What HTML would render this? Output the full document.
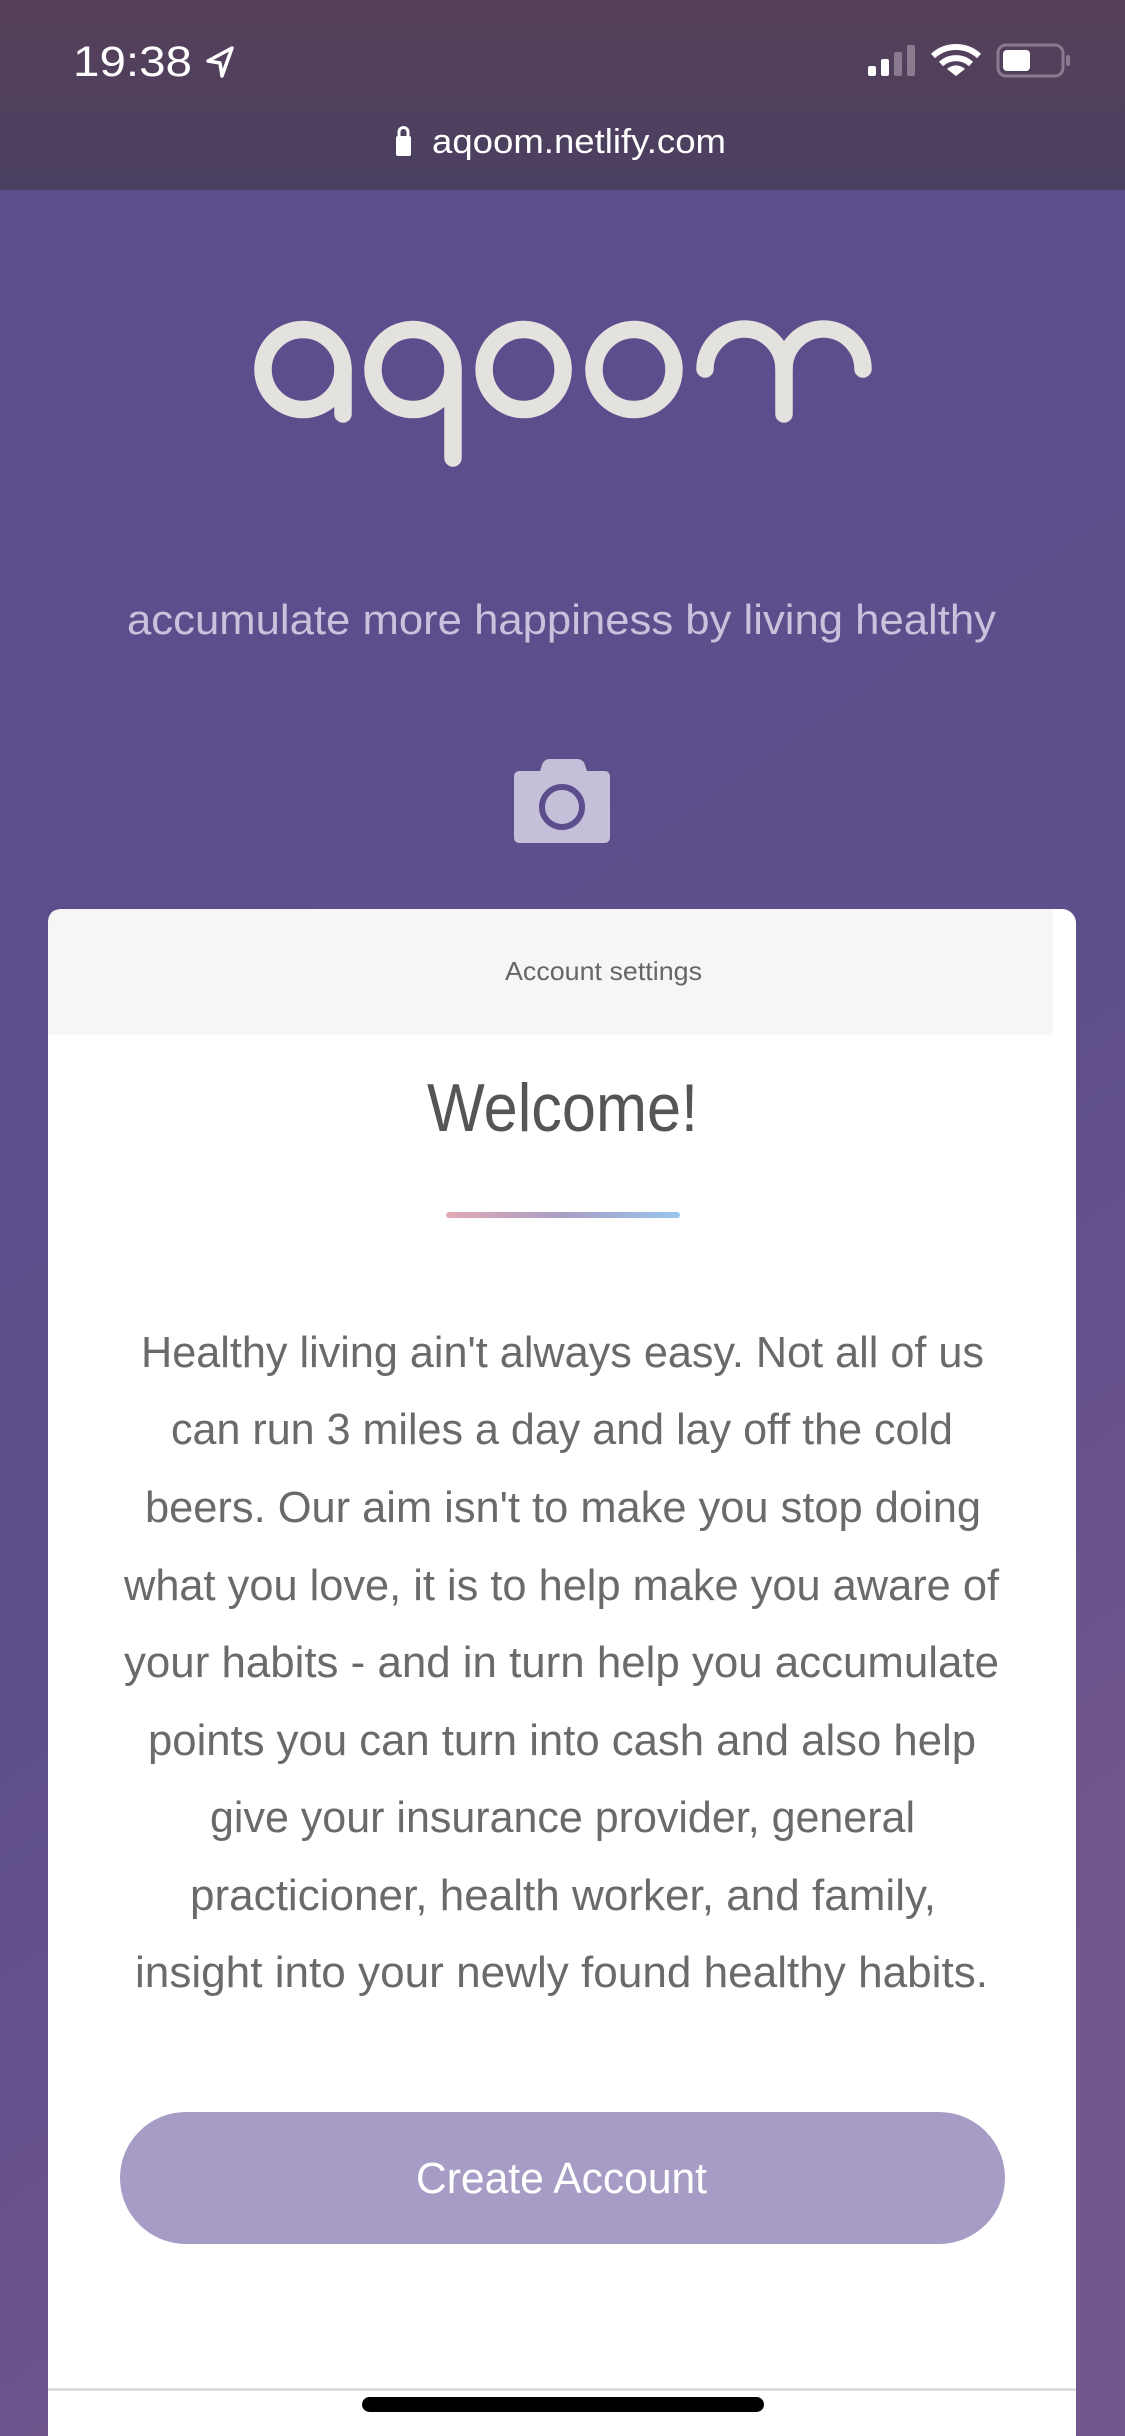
<!DOCTYPE html>
<html><head><meta charset="utf-8">
<style>
html,body{margin:0;padding:0;width:1125px;height:2436px;overflow:hidden;background:#5c4e8c}
svg{display:block}
text{font-family:"Liberation Sans",sans-serif}
</style></head><body>
<svg width="1125" height="2436" viewBox="0 0 1125 2436" xmlns="http://www.w3.org/2000/svg">
<defs>
<linearGradient id="top" x1="0" y1="0" x2="0" y2="1"><stop offset="0" stop-color="#55405a"/><stop offset="1" stop-color="#4a3f60"/></linearGradient>
<linearGradient id="bg" x1="0" y1="0" x2="0.35" y2="1"><stop offset="0" stop-color="#5c4e8c"/><stop offset="0.6" stop-color="#5d4e8c"/><stop offset="1" stop-color="#72578c"/></linearGradient>
<linearGradient id="bar" x1="0" y1="0" x2="1" y2="0"><stop offset="0" stop-color="#e2a9b4"/><stop offset="0.5" stop-color="#a99ec6"/><stop offset="1" stop-color="#98c6ec"/></linearGradient>
</defs>
<rect x="0" y="190" width="1125" height="2246" fill="url(#bg)"/>
<rect x="0" y="0" width="1125" height="190" fill="url(#top)"/>
<!-- status bar -->
<text x="73" y="76" font-size="43" fill="#fff" textLength="119" lengthAdjust="spacingAndGlyphs">19:38</text>
<path d="M232 48 L208 61 L220 63 L222 76 Z" fill="none" stroke="#fff" stroke-width="3.5" stroke-linejoin="round"/>
<rect x="868" y="66" width="8" height="10" rx="2" fill="#fff"/>
<rect x="881" y="59" width="8" height="17" rx="2" fill="#fff"/>
<rect x="894" y="52" width="8" height="24" rx="2" fill="#8a7a90"/>
<rect x="907" y="45" width="8" height="31" rx="2" fill="#8a7a90"/>
<path d="M933 56 A34 34 0 0 1 979 56" fill="none" stroke="#fff" stroke-width="6"/>
<path d="M941 64 A22 22 0 0 1 971 64" fill="none" stroke="#fff" stroke-width="6"/>
<path d="M956 76 L947 69 A13 13 0 0 1 965 69 Z" fill="#fff"/>
<rect x="998" y="45" width="65" height="31" rx="8" fill="none" stroke="#8a7a90" stroke-width="3"/>
<rect x="1003" y="50" width="27" height="21" rx="4" fill="#fff"/>
<rect x="1066" y="55" width="4" height="11" rx="2" fill="#8a7a90"/>
<!-- url -->
<rect x="396" y="136" width="15" height="20" rx="2" fill="#fff"/>
<path d="M399 138 V132 A4.5 4.5 0 0 1 408 132 V138" fill="none" stroke="#fff" stroke-width="3"/>
<text x="432" y="153" font-size="34" fill="#fff" textLength="294" lengthAdjust="spacingAndGlyphs">aqoom.netlify.com</text>
<!-- logo -->
<g fill="none" stroke="#e3e2de" stroke-width="17.5" stroke-linecap="round">
<ellipse cx="303" cy="369.5" rx="40" ry="40"/>
<line x1="343" y1="369" x2="343" y2="414"/>
<ellipse cx="413" cy="369.5" rx="40" ry="40"/>
<line x1="453" y1="369" x2="453" y2="458"/>
<ellipse cx="523.6" cy="369.5" rx="39.5" ry="40"/>
<ellipse cx="634" cy="369.5" rx="40" ry="40"/>
<path d="M705 369 A39.5 40 0 0 1 784 369 V414"/>
<path d="M784 369 A39.5 40 0 0 1 863 369"/>
</g>
<!-- tagline -->
<text x="127" y="634" font-size="42" fill="#c8c2dc" textLength="869" lengthAdjust="spacingAndGlyphs">accumulate more happiness by living healthy</text>
<!-- camera -->
<path d="M540 771 L542 765 Q544 759 550 759 L577 759 Q583 759 585 765 L587 771 L604 771 Q610 771 610 777 L610 837 Q610 843 604 843 L520 843 Q514 843 514 837 L514 777 Q514 771 520 771 Z" fill="#c5c0d9"/>
<ellipse cx="562" cy="807" rx="20" ry="20" fill="none" stroke="#5c4e8c" stroke-width="6"/>
<!-- card -->
<rect x="48" y="909" width="1028" height="1540" rx="14" fill="#fff"/>
<path d="M48 1035 V923 Q48 909 62 909 L1053 909 V1035 Z" fill="#f6f6f6"/>
<text x="505" y="980" font-size="26" fill="#666" textLength="197" lengthAdjust="spacingAndGlyphs">Account settings</text>
<text x="427" y="1131" font-size="68" fill="#555" textLength="271" lengthAdjust="spacingAndGlyphs">Welcome!</text>
<rect x="446" y="1212" width="234" height="6" rx="3" fill="url(#bar)"/>
<g font-size="44" fill="#6a6a6a">
<text x="141" y="1367" textLength="843" lengthAdjust="spacingAndGlyphs">Healthy living ain't always easy. Not all of us</text>
<text x="171" y="1444" textLength="782" lengthAdjust="spacingAndGlyphs">can run 3 miles a day and lay off the cold</text>
<text x="145" y="1522" textLength="836" lengthAdjust="spacingAndGlyphs">beers. Our aim isn't to make you stop doing</text>
<text x="124" y="1600" textLength="875" lengthAdjust="spacingAndGlyphs">what you love, it is to help make you aware of</text>
<text x="124" y="1677" textLength="875" lengthAdjust="spacingAndGlyphs">your habits - and in turn help you accumulate</text>
<text x="148" y="1755" textLength="828" lengthAdjust="spacingAndGlyphs">points you can turn into cash and also help</text>
<text x="210" y="1832" textLength="705" lengthAdjust="spacingAndGlyphs">give your insurance provider, general</text>
<text x="190" y="1910" textLength="746" lengthAdjust="spacingAndGlyphs">practicioner, health worker, and family,</text>
<text x="135" y="1987" textLength="853" lengthAdjust="spacingAndGlyphs">insight into your newly found healthy habits.</text>
</g>
<rect x="120" y="2112" width="885" height="132" rx="66" fill="#a79cc5"/>
<text x="416" y="2193" font-size="44" fill="#fff" textLength="291" lengthAdjust="spacingAndGlyphs">Create Account</text>
<rect x="48" y="2388" width="1028" height="3" fill="#ddd"/>
<rect x="362" y="2397" width="402" height="15" rx="7.5" fill="#000"/>
</svg>
</body></html>
